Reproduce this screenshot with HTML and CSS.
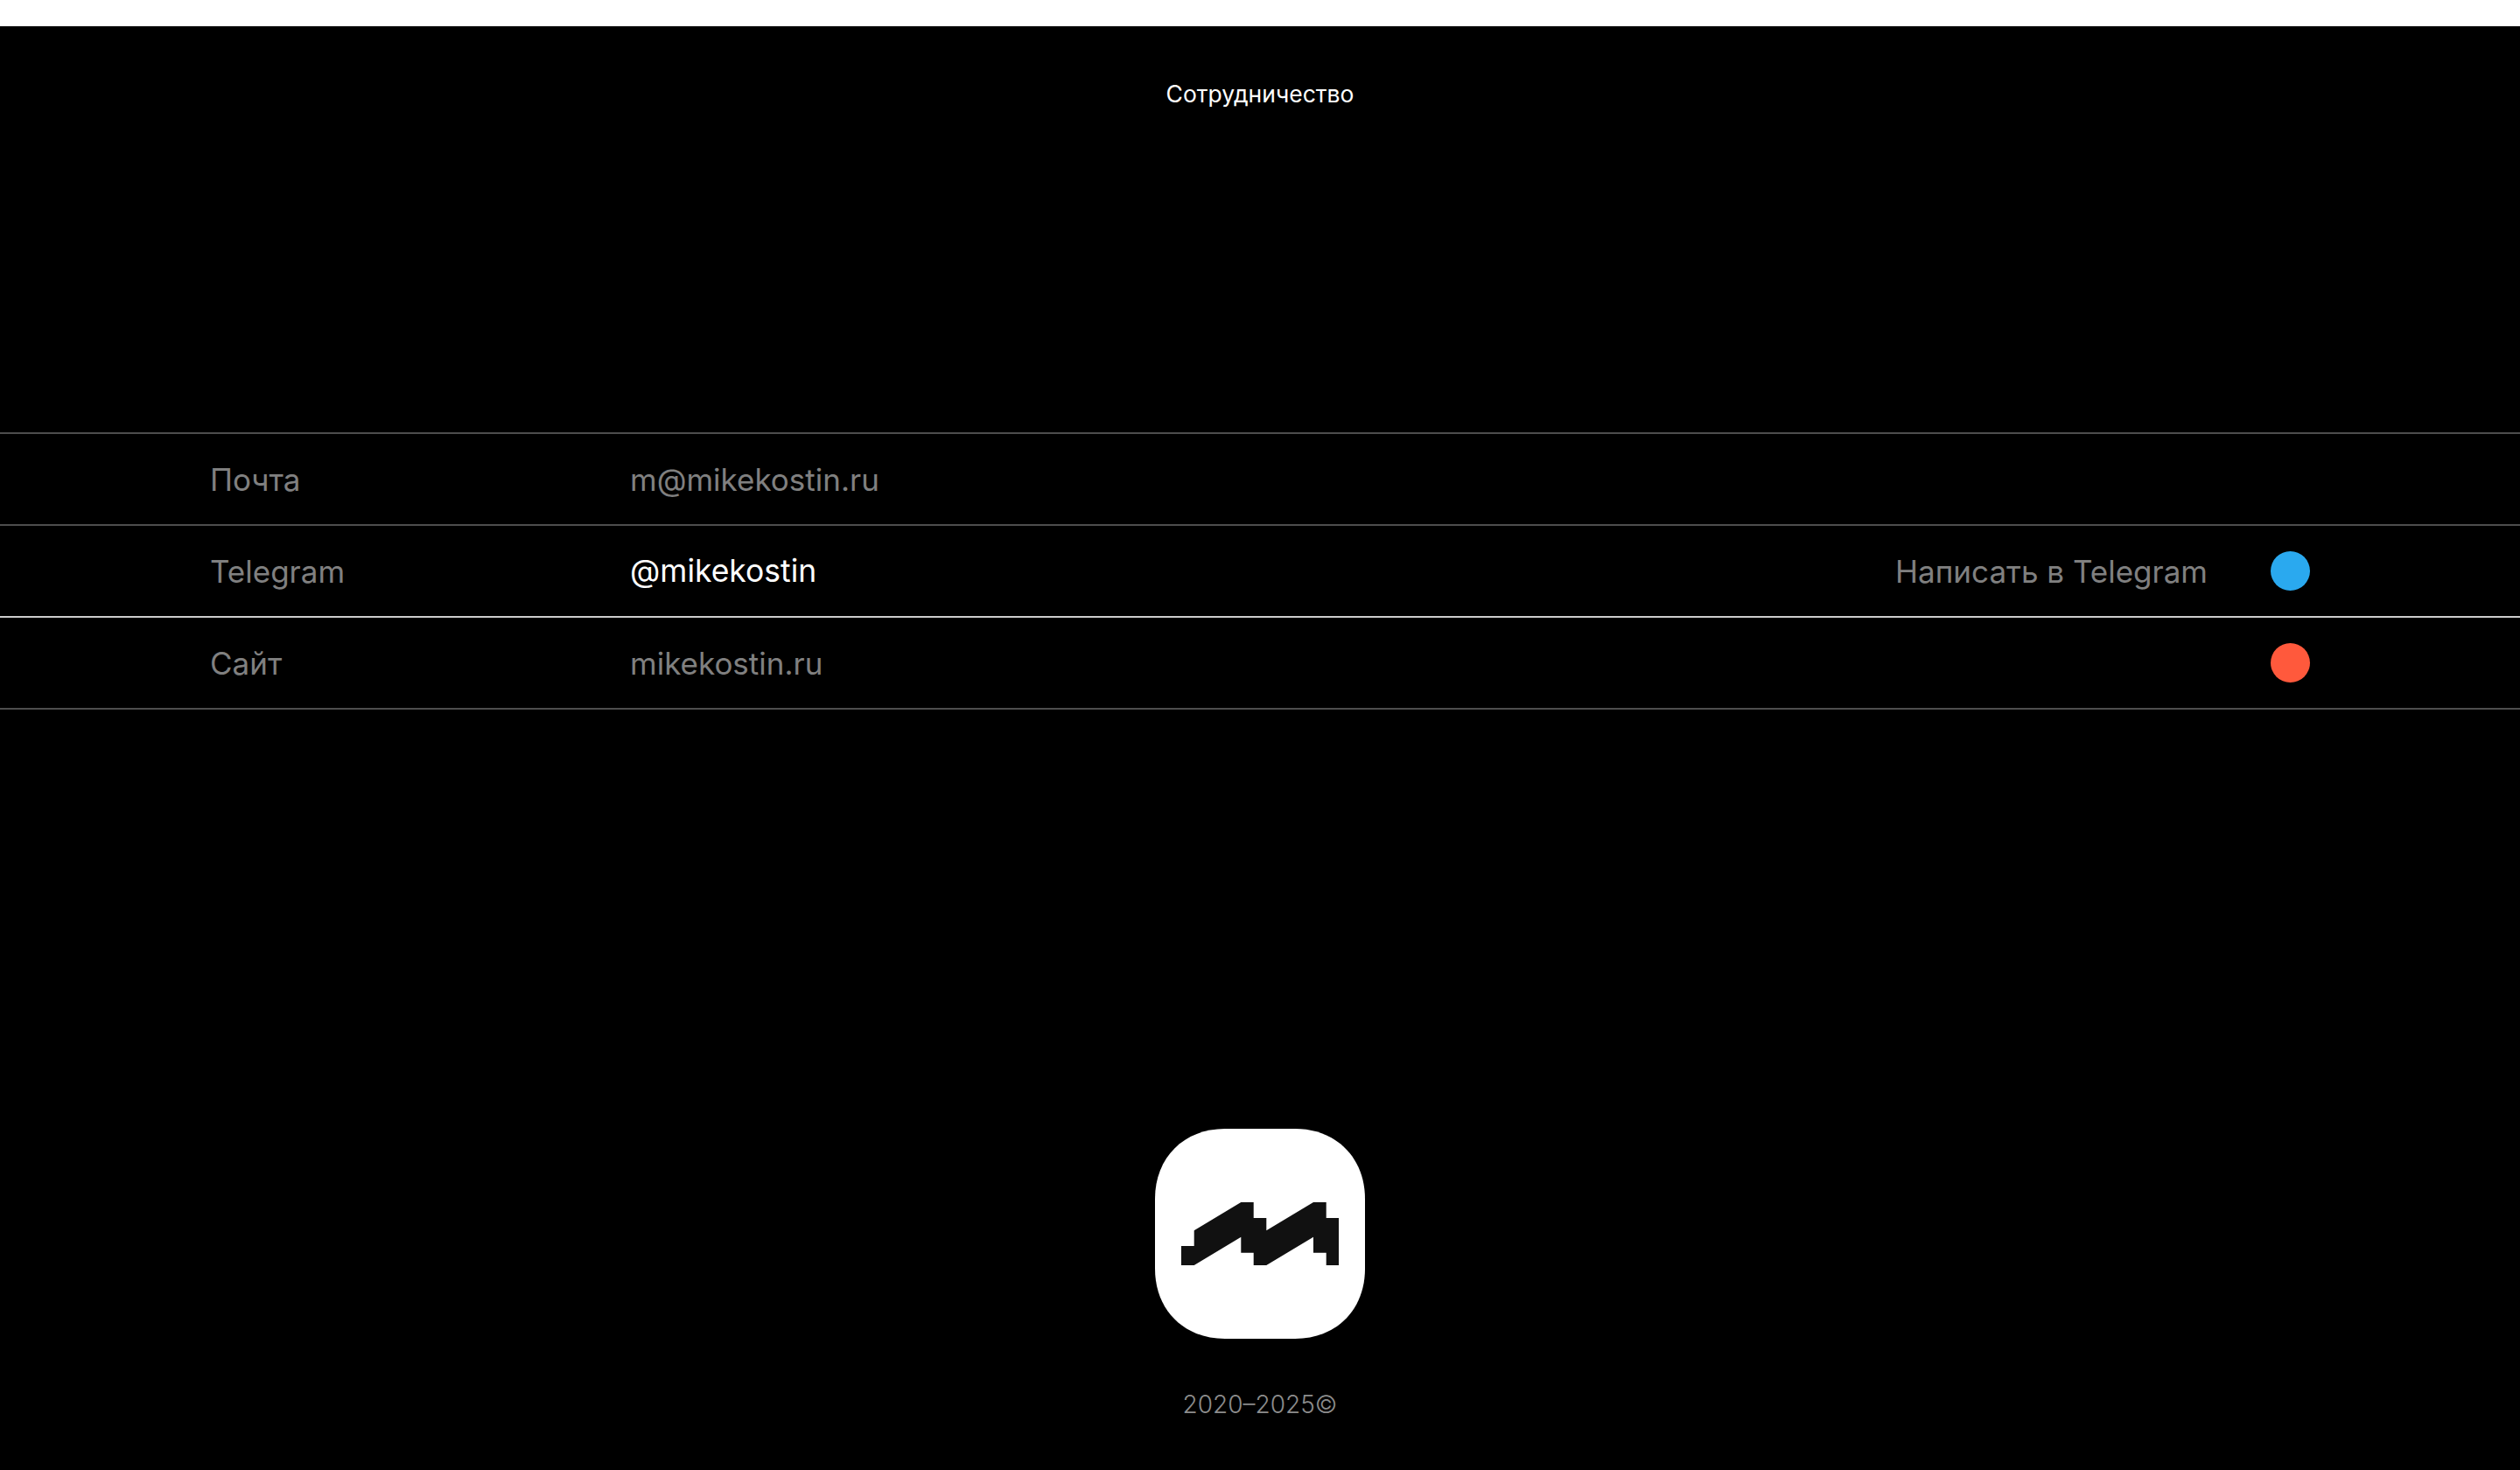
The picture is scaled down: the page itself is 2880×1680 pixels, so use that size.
FILE: index.html
```html
<!DOCTYPE html>
<html lang="ru">
    <head>
        <title>Сотрудничество</title>
        <meta charset="UTF-8">
        <meta name="viewport" content="width=device-width, initial-scale=1.0">
        <link rel="stylesheet" href="styles.css">
    </head>
    <body>
        <div class="topbar"></div>
        <h1 class="title">Сотрудничество</h1>
        <div class="contacts">
            <div class="row">
                <span class="label">Почта</span>
                <span class="value">m@mikekostin.ru</span>
            </div>
            <div class="row row-active">
                <span class="label">Telegram</span>
                <span class="value">@mikekostin</span>
                <span class="action">Написать в Telegram</span>
                <span class="dot dot-blue"></span>
            </div>
            <div class="row">
                <span class="label">Сайт</span>
                <span class="value">mikekostin.ru</span>
                <span class="dot dot-red"></span>
            </div>
        </div>
        <div class="footer">
            <svg class="logo" width="240" height="240" viewBox="0 0 240 240">
                <path fill="#fff" d="M80 0H160C207 0 240 33 240 80V160C240 207 207 240 160 240H80C33 240 0 207 0 160V80C0 33 33 0 80 0Z"/>
                <path fill="#111" d="M30 134H44.7V116.300L98.300 84H112.700V102H127.300V116.300L181 84H195.700V102H210V156H195.700V141.700H181V123.700L127.300 156H112.700V141.700H98.300V123.700L44.700 156H30Z"/>
            </svg>
            <p class="copyright">2020–2025©</p>
        </div>
    </body>
</html>
```

FILE: styles.css
```css
html,body{margin:0; padding:0; background:#000;}

body{
    font-family:"Inter","Noto Sans",sans-serif;
    color:#fff;
}

.topbar{height:30px; background:#fff;}

.title{
    margin:0;
    padding:60px 0 0;
    height:464px;
    box-sizing:border-box;
    text-align:center;
    font-size:26.500px;
    line-height:34px;
    font-weight:400;
}

.contacts{border-top:2px solid #4d4d4d;}

.row{
    display:flex;
    align-items:center;
    height:103px;
    padding:0 240px;
    border-bottom:2px solid #4d4d4d;
    font-size:35px;
    color:#808080;
}

.row-active{border-bottom-color:#ccc;}

.row-active .value{color:#fff; font-size:35.500px;}

.label{width:480px;}

.value{flex:1;}

.action{margin-right:72px;}

.dot{
    width:45px;
    height:45px;
    border-radius:50%;
}

.dot-blue{background:#2aa9ef;}

.dot-red{background:#ff593c;}

.footer{
    display:flex;
    flex-direction:column;
    align-items:center;
    padding-top:479px;
    height:390px;
}

.logo{display:block;}

.copyright{
    margin:58px 0 0;
    font-size:28px;
    line-height:34px;
    font-weight:300;
    color:#8c8c8c;
}
```
